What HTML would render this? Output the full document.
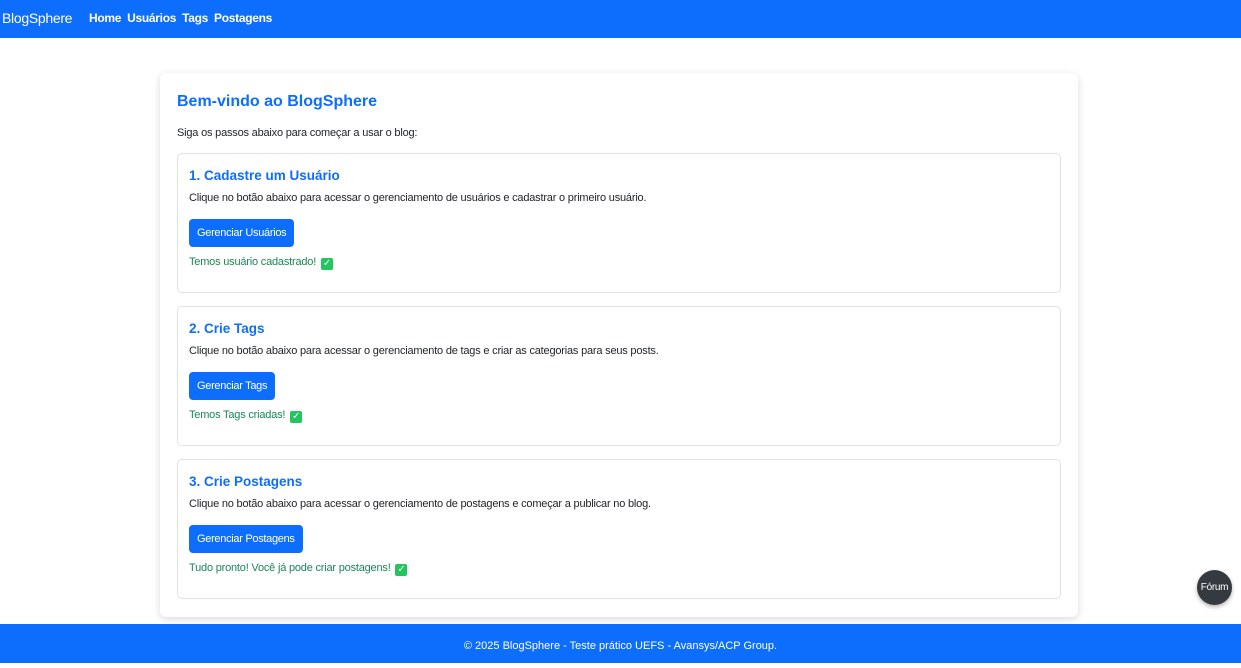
<!DOCTYPE html>
<html><head><meta charset="utf-8"><style>
*{box-sizing:border-box;margin:0;padding:0}
body{width:1241px;height:663px;overflow:hidden;background:#fff;font-family:"Liberation Sans",sans-serif;color:#212529;position:relative}
.nav{position:absolute;left:0;top:0;width:1241px;height:38px;background:#0d6efd;color:#fff}
.brand{position:absolute;left:2px;top:10px;font-size:14px;letter-spacing:-0.3px}
.links{position:absolute;left:89px;top:11px;font-size:12px;font-weight:bold;letter-spacing:-0.3px}
.links span{margin-right:6px}
.main{position:absolute;left:160px;top:73px;width:918px;height:544px;background:#fff;border-radius:6px;box-shadow:0 2px 8px rgba(0,0,0,.15)}
h1{position:absolute;left:17px;top:20px;font-size:16px;color:#0d6efd;font-weight:bold}
.intro{position:absolute;left:17px;top:54px;font-size:11px;letter-spacing:-0.2px}
.step{position:absolute;left:17px;width:884px;height:140px;border:1px solid #dee2e6;border-radius:5px}
.step h2{position:absolute;left:11px;top:14px;font-size:13.5px;color:#0d6efd;font-weight:bold;-webkit-text-stroke:0}
.step p{position:absolute;left:11px;top:38px;font-size:11px;letter-spacing:-0.2px}
.btn{position:absolute;left:11px;top:65px;height:28px;background:#0d6efd;color:#fff;font-size:11px;border-radius:4px;padding:0 8px;line-height:28px;letter-spacing:-0.3px}
.ok{position:absolute;left:11px;top:102px;font-size:11px;color:#198754;letter-spacing:-0.2px}
.chk{display:inline-block;width:12px;height:12px;background:#22c55e;border-radius:2px;color:#fff;font-size:10px;line-height:12px;text-align:center;vertical-align:-1px;margin-left:2px}
.forum{position:absolute;left:1197px;top:570px;width:35px;height:35px;border-radius:50%;background:#343a40;color:#fff;font-size:10px;line-height:35px;text-align:center;box-shadow:0 2px 4px rgba(0,0,0,.3);letter-spacing:-0.3px}
.foot{position:absolute;left:0;top:624px;width:1241px;height:39px;background:#0d6efd;color:#fff;font-size:11px;text-align:center;line-height:44px}
</style></head><body>
<div class="nav"><div class="brand">BlogSphere</div><div class="links"><span>Home</span><span>Usuários</span><span>Tags</span><span>Postagens</span></div></div>
<div class="main">
<h1>Bem-vindo ao BlogSphere</h1>
<div class="intro">Siga os passos abaixo para começar a usar o blog:</div>
<div class="step" style="top:80px"><h2>1. Cadastre um Usuário</h2><p>Clique no botão abaixo para acessar o gerenciamento de usuários e cadastrar o primeiro usuário.</p><div class="btn">Gerenciar Usuários</div><div class="ok">Temos usuário cadastrado! <span class="chk">✓</span></div></div>
<div class="step" style="top:233px"><h2>2. Crie Tags</h2><p>Clique no botão abaixo para acessar o gerenciamento de tags e criar as categorias para seus posts.</p><div class="btn">Gerenciar Tags</div><div class="ok">Temos Tags criadas! <span class="chk">✓</span></div></div>
<div class="step" style="top:386px"><h2>3. Crie Postagens</h2><p>Clique no botão abaixo para acessar o gerenciamento de postagens e começar a publicar no blog.</p><div class="btn">Gerenciar Postagens</div><div class="ok">Tudo pronto! Você já pode criar postagens! <span class="chk">✓</span></div></div>
</div>
<div class="forum">Fórum</div>
<div class="foot">© 2025 BlogSphere - Teste prático UEFS - Avansys/ACP Group.</div>
</body></html>
